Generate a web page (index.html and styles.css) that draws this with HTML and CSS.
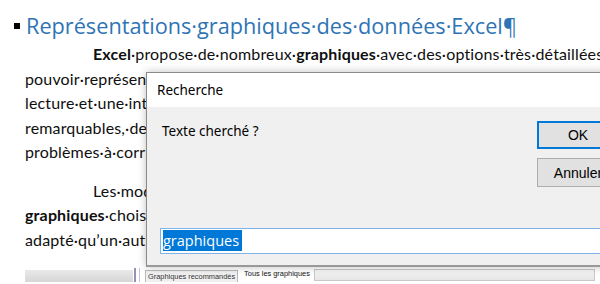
FILE: index.html
```html
<!DOCTYPE html>
<html lang="fr">
<head>
    <meta charset="UTF-8">
    <meta name="viewport" content="width=device-width, initial-scale=1.0">
    <title>Représentations graphiques des données Excel</title>
    <link rel="stylesheet" href="styles.css">
</head>

<body>
    <div class="page">
        <h1 class="heading"><span class="bullet"></span>Représentations·graphiques·des·données·Excel¶</h1>

        <p class="para">
            <span class="indent"></span><b>Excel</b>·propose·de·nombreux·<b>graphiques</b>·avec·des·options·très·détaillées·pour<br>
            pouvoir·représenter·visuellement·des·données·numériques·et·en·faciliter·la<br>
            lecture·et·une·interprétation·rapide.·Ils·permettent·de·déceler·des·tendances<br>
            remarquables,·des·évolutions·à·surveiller·et·ainsi·de·mettre·en·évidence·des<br>
            problèmes·à·corriger.¶
        </p>

        <p class="para">
            <span class="indent"></span>Les·modèles·proposés·sont·nombreux.·Encore·faut-il·que·les<br>
            <b>graphiques</b>·choisis·soient·pertinents.·Certains·types·sont·plus<br>
            adapté·qu’un·autre·pour·représenter·une·série·de·données.¶
        </p>

        <div class="strip">
            <div class="scrollbar"></div>
            <div class="splitter"></div>
            <div class="tab">Graphiques recommandés</div>
            <div class="tab active">Tous les graphiques</div>
            <div class="tabfill"></div>
        </div>
    </div>

    <!-- InputBox window on top of the document -->
    <div class="dialog">
        <div class="dialog-title">Recherche</div>
        <div class="dialog-body">
            <div class="dialog-top">
                <div class="prompt">Texte cherché ?</div>
                <div class="buttons">
                    <button class="btn default">OK</button>
                    <button class="btn">Annuler</button>
                </div>
            </div>
            <div class="field"><span class="selected">graphiques</span></div>
        </div>
    </div>
</body>
</html>
```

FILE: styles.css
```css
:root {
    --headBlue:   rgb(46, 116, 181);
    --docText:    rgb(15, 15, 15);
    --dlgGray:    rgb(240, 240, 240);
    --accent:     rgb(0, 120, 215);
    --fieldLine:  rgb(126, 180, 234);
}

html, body {
    margin: 0;
    width: 600px;
    height: 284px;
    overflow: hidden;
    background: white;
}

body {
    position: relative;
    font-family: Lato, "Open Sans", sans-serif;
    color: var(--docText);
}

.page {
    padding: 8px 0 0 14px;
}

.heading {
    display: flex;
    align-items: center;
    margin: 0;
    height: 34px;
    font-family: "Open Sans", sans-serif;
    font-size: 21.7px;
    font-weight: 400;
    color: var(--headBlue);
    white-space: nowrap;
}

.bullet {
    width: 6px;
    height: 6px;
    margin: 2px 6px 0 0;
    background: black;
}

.para {
    margin: 0 0 0 11px;
    font-size: 16px;
    line-height: 24.5px;
    letter-spacing: 0.15px;
    white-space: nowrap;
}

.para + .para {
    margin-top: 14px;
}

.indent {
    display: inline-block;
    width: 68px;
}

/* picture of the chart dialog tabs, under the text */
.strip {
    display: flex;
    align-items: flex-end;
    height: 14px;
    margin: 16px 0 0 11px;
    font-family: "Liberation Sans", sans-serif;
    font-size: 7.4px;
}

.scrollbar {
    width: 108px;
    height: 12px;
    background: linear-gradient(#e9e9e9, #d6d6d6);
}

.splitter {
    width: 3px;
    height: 14px;
    margin: 0 5px 0 1px;
    border-left: 2px solid #9a8fb8;
    border-right: 1px solid #c9c2dc;
}

.tab {
    height: 11px;
    padding: 0 2px;
    line-height: 12px;
    border: 1px solid #b9b9b9;
    border-bottom: none;
    background: #f0f0f0;
    color: #333;
}

.tab.active {
    margin-left: 3px;
    border-color: white;
    background: white;
    height: 13px;
    line-height: 10px;
    color: #111;
}

.tabfill {
    flex: 1;
    height: 10px;
    margin: 0 5px 1px 1px;
    border: 1px solid #c8c8c8;
    background: linear-gradient(#f6f6f6, #e6e6e6);
}

/* dialog */
.dialog {
    position: absolute;
    left: 146px;
    top: 72px;
    width: 480px;
    height: 192px;
    display: flex;
    flex-direction: column;
    border: 1px solid #8a8a8a;
    border-bottom: 2px solid #999;
    box-shadow: 0 0 8px rgba(0, 0, 0, 0.25);
    font-family: "Noto Sans", "Open Sans", sans-serif;
    color: black;
}

.dialog-title {
    height: 34px;
    padding-left: 10px;
    line-height: 35px;
    font-size: 13.5px;
    background: white;
}

.dialog-body {
    flex: 1;
    background: var(--dlgGray);
    display: flex;
    flex-direction: column;
}

.dialog-top {
    display: flex;
    justify-content: space-between;
    height: 121px;
}

.prompt {
    padding: 15px 0 0 15px;
    font-size: 13.5px;
}

.buttons {
    display: flex;
    flex-direction: column;
    gap: 9px;
    padding-top: 14px;
    width: 90px;
}

.btn {
    width: 82px;
    height: 29px;
    padding: 0;
    border: 1px solid #adadad;
    background: #e1e1e1;
    font-family: "Liberation Sans", sans-serif;
    font-size: 14px;
    color: black;
}

.btn.default {
    height: 28px;
    border: 2px solid var(--accent);
}

.field {
    height: 23px;
    margin-left: 13px;
    padding: 1px 0 0 2px;
    border: 1px solid var(--fieldLine);
    border-right: none;
    background: white;
    font-family: "Open Sans", sans-serif;
    font-size: 14.5px;
    line-height: 21px;
}

.selected {
    display: inline-block;
    padding-right: 3px;
    background: var(--accent);
    color: white;
}
```
